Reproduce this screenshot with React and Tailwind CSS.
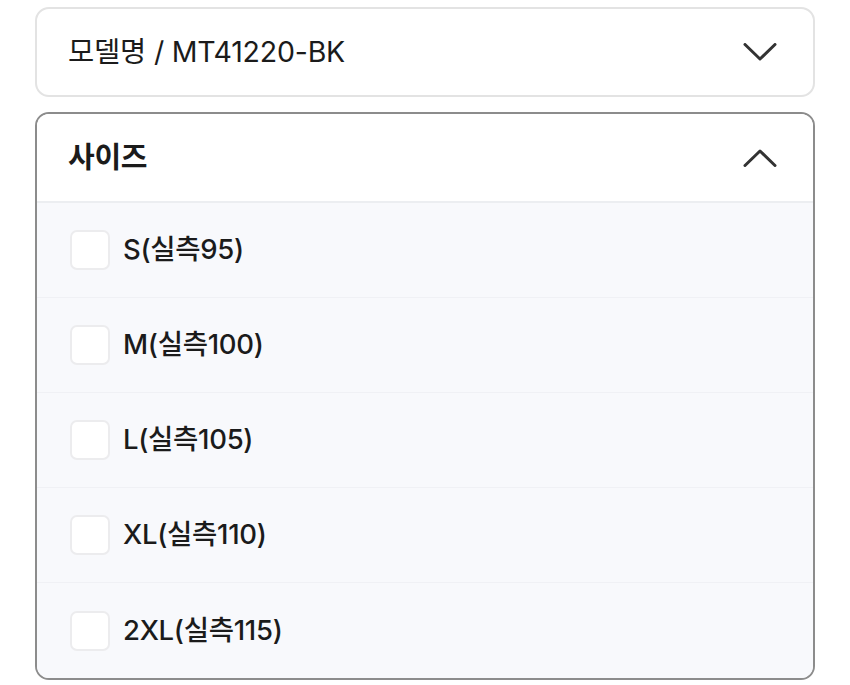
import { useState } from "react";

const sizes = ["S(실측95)", "M(실측100)", "L(실측105)", "XL(실측110)", "2XL(실측115)"];

function Chevron({ up }) {
  return (
    <svg width="34" height="18" viewBox="0 0 34 18" fill="none" className="text-[#333333]">
      <path
        d={up ? "M2 16.5 L17 2 L32 16.5" : "M2 1.5 L17 16 L32 1.5"}
        stroke="currentColor"
        strokeWidth="3"
        strokeLinecap="round"
        strokeLinejoin="round"
      />
    </svg>
  );
}

export default function App() {
  const [checked, setChecked] = useState({});

  return (
    <div
      className="min-h-[685px] bg-white px-[35px] pt-[7px] text-[#1b1b1b]"
      style={{ fontFamily: "Inter, 'Noto Sans CJK KR', sans-serif" }}
    >
      {/* 모델명 */}
      <div className="flex h-[90px] items-center justify-between rounded-[14px] border-2 border-[#e3e3e3] pl-[31px] pr-[36px]">
        <span className="text-[28.5px] tracking-[-0.2px]">모델명 / MT41220-BK</span>
        <Chevron />
      </div>

      {/* 사이즈 */}
      <div className="mt-[15px] overflow-hidden rounded-[14px] border-2 border-[#8c8c8c]">
        <div className="flex h-[89px] items-center justify-between border-b-2 border-[#eceef1] bg-white pl-[31px] pr-[36px]">
          <span className="text-[29px] font-bold tracking-[-0.3px]">사이즈</span>
          <Chevron up />
        </div>
        <div className="bg-[#f8f9fc]">
          {sizes.map((s, i) => (
            <label
              key={s}
              className={`flex h-[95px] cursor-pointer items-center gap-[13px] pl-[33px] ${
                i < sizes.length - 1 ? "border-b border-[#f0f1f5]" : ""
              }`}
            >
              <input
                type="checkbox"
                className="peer sr-only"
                checked={!!checked[s]}
                onChange={() => setChecked((p) => ({ ...p, [s]: !p[s] }))}
              />
              <span className="h-[40px] w-[40px] rounded-[7px] border-2 border-[#ececee] bg-white peer-checked:bg-[#222]" />
              <span className="text-[27.5px] font-medium tracking-[-0.3px]">{s}</span>
            </label>
          ))}
        </div>
      </div>
    </div>
  );
}
